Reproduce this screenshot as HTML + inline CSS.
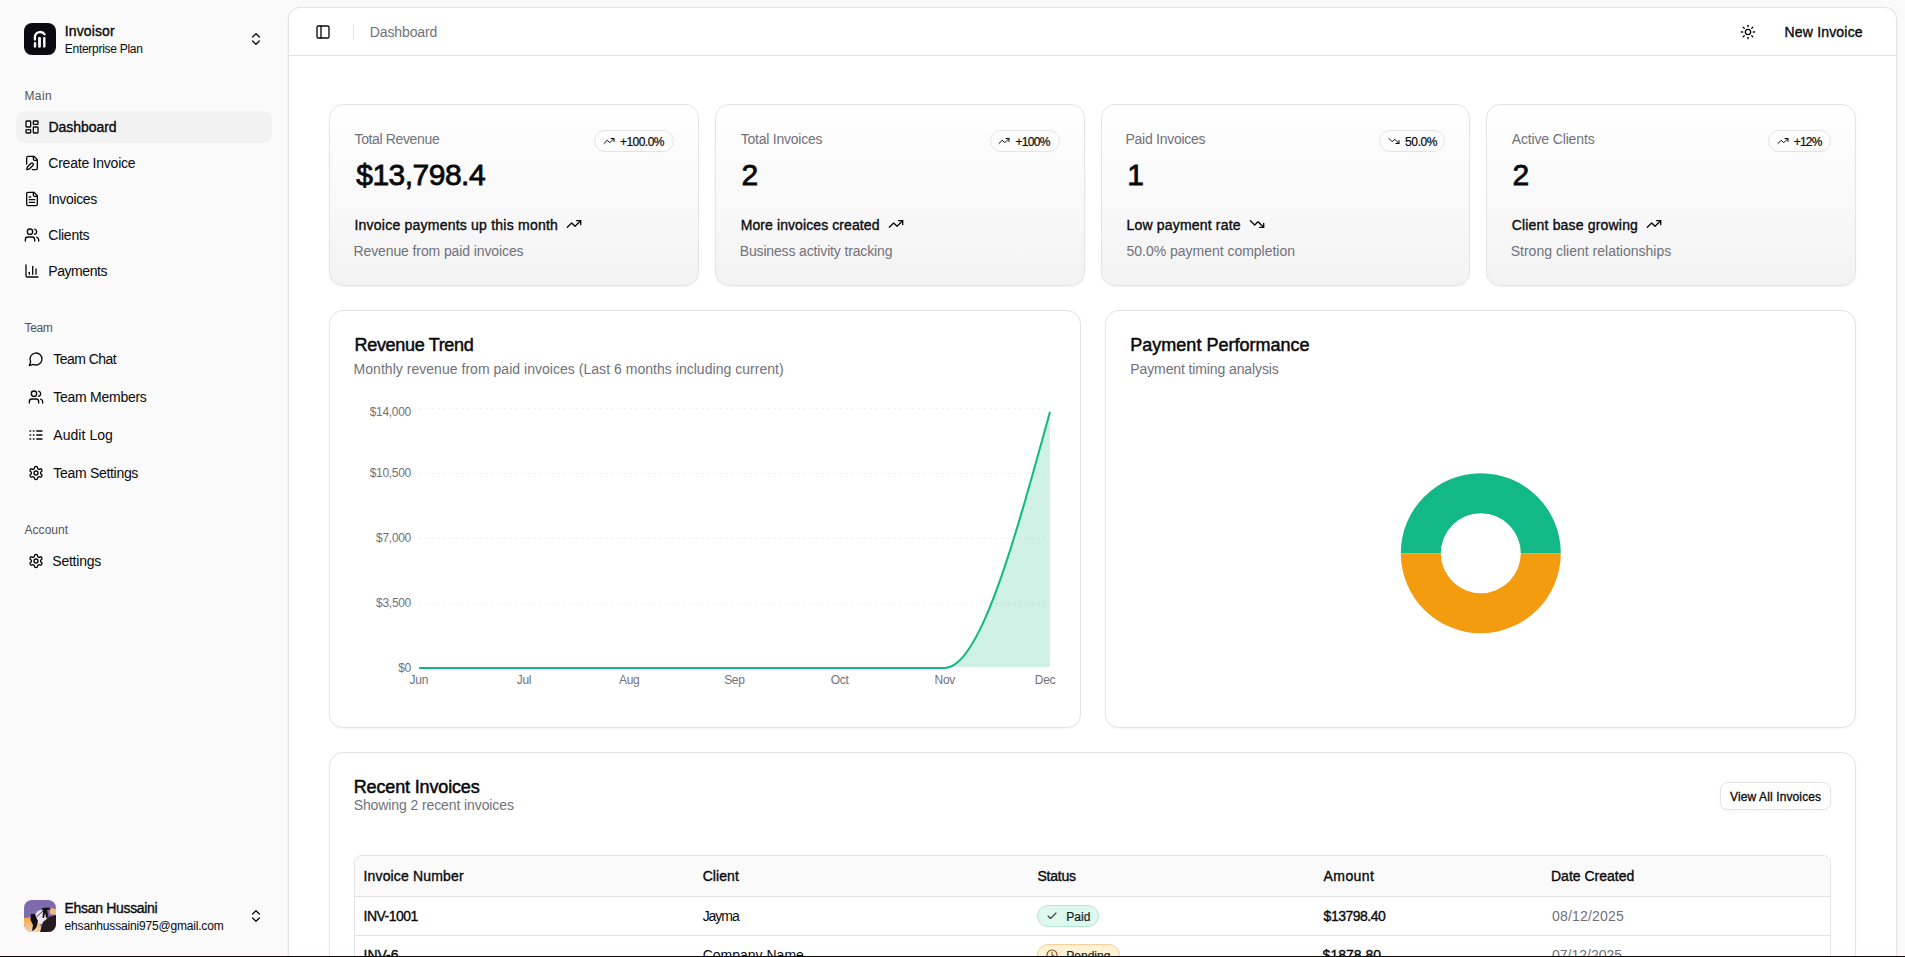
<!DOCTYPE html>
<html><head><meta charset="utf-8">
<style>
*{box-sizing:border-box;margin:0;padding:0}
html,body{width:1905px;height:957px;overflow:hidden;background:#fafafa;font-family:"Liberation Sans",sans-serif;color:#09090b}
.a{position:absolute;white-space:nowrap;line-height:1}
svg.i{position:absolute;fill:none;stroke:currentColor;stroke-linecap:round;stroke-linejoin:round}
.box{position:absolute}
</style></head><body>
<div class="box" style="left:24px;top:23px;width:32px;height:32px;background:#0b0a12;border-radius:8px"></div>
<svg class="box" style="left:24px;top:23px" width="32" height="32" viewBox="0 0 32 32"><path d="M10.9 16.6V14.2A5.3 5.3 0 0 1 20.6 11.4" fill="none" stroke="#fff" stroke-width="2.3" stroke-linecap="round"/><rect x="9.8" y="19" width="2.4" height="5.7" rx="1.1" fill="#fff"/><rect x="14.1" y="14" width="2.8" height="10.7" rx="1.1" fill="#fff"/><rect x="19.1" y="14" width="2.4" height="10.7" rx="1.1" fill="#fff"/></svg>
<svg class="i" style="left:248px;top:31px;color:#09090b" width="16" height="16" viewBox="0 0 24 24" stroke-width="2"><path d="m7 15 5 5 5-5"/><path d="m7 9 5-5 5 5"/></svg>
<div class="box" style="left:16px;top:111px;width:256px;height:32px;background:#f2f2f3;border-radius:8px"></div>
<svg class="i" style="left:24px;top:119px;color:#09090b" width="16" height="16" viewBox="0 0 24 24" stroke-width="2"><rect width="7" height="9" x="3" y="3" rx="1"/><rect width="7" height="5" x="14" y="3" rx="1"/><rect width="7" height="9" x="14" y="12" rx="1"/><rect width="7" height="5" x="3" y="16" rx="1"/></svg>
<svg class="i" style="left:24px;top:155px;color:#09090b" width="16" height="16" viewBox="0 0 24 24" stroke-width="2"><path d="M12.5 22H18a2 2 0 0 0 2-2V7l-5-5H6a2 2 0 0 0-2 2v9.5"/><path d="M14 2v4a2 2 0 0 0 2 2h4"/><path d="M13.378 15.626a1 1 0 1 0-3.004-3.004l-5.01 5.012a2 2 0 0 0-.506.854l-.837 2.87a.5.5 0 0 0 .62.62l2.87-.837a2 2 0 0 0 .854-.506z"/></svg>
<svg class="i" style="left:24px;top:191px;color:#09090b" width="16" height="16" viewBox="0 0 24 24" stroke-width="2"><path d="M15 2H6a2 2 0 0 0-2 2v16a2 2 0 0 0 2 2h12a2 2 0 0 0 2-2V7Z"/><path d="M14 2v4a2 2 0 0 0 2 2h4"/><path d="M10 9H8"/><path d="M16 13H8"/><path d="M16 17H8"/></svg>
<svg class="i" style="left:24px;top:227px;color:#09090b" width="16" height="16" viewBox="0 0 24 24" stroke-width="2"><path d="M16 21v-2a4 4 0 0 0-4-4H6a4 4 0 0 0-4 4v2"/><circle cx="9" cy="7" r="4"/><path d="M22 21v-2a4 4 0 0 0-3-3.87"/><path d="M16 3.13a4 4 0 0 1 0 7.75"/></svg>
<svg class="i" style="left:24px;top:263px;color:#09090b" width="16" height="16" viewBox="0 0 24 24" stroke-width="2"><path d="M3 3v16a2 2 0 0 0 2 2h16"/><path d="M18 17V9"/><path d="M13 17V5"/><path d="M8 17v-3"/></svg>
<svg class="i" style="left:28px;top:351px;color:#09090b" width="16" height="16" viewBox="0 0 24 24" stroke-width="2"><path d="M7.9 20A9 9 0 1 0 4 16.1L2 22Z"/></svg>
<svg class="i" style="left:28px;top:389px;color:#09090b" width="16" height="16" viewBox="0 0 24 24" stroke-width="2"><path d="M16 21v-2a4 4 0 0 0-4-4H6a4 4 0 0 0-4 4v2"/><circle cx="9" cy="7" r="4"/><path d="M22 21v-2a4 4 0 0 0-3-3.87"/><path d="M16 3.13a4 4 0 0 1 0 7.75"/></svg>
<svg class="i" style="left:28px;top:427px;color:#09090b" width="16" height="16" viewBox="0 0 24 24" stroke-width="2"><path d="M13 12h8"/><path d="M13 18h8"/><path d="M13 6h8"/><path d="M3 12h1"/><path d="M3 18h1"/><path d="M3 6h1"/><path d="M8 12h1"/><path d="M8 18h1"/><path d="M8 6h1"/></svg>
<svg class="i" style="left:28px;top:465px;color:#09090b" width="16" height="16" viewBox="0 0 24 24" stroke-width="2"><path d="M12.22 2h-.44a2 2 0 0 0-2 2v.18a2 2 0 0 1-1 1.73l-.43.25a2 2 0 0 1-2 0l-.15-.08a2 2 0 0 0-2.73.73l-.22.38a2 2 0 0 0 .73 2.73l.15.1a2 2 0 0 1 1 1.72v.51a2 2 0 0 1-1 1.74l-.15.09a2 2 0 0 0-.73 2.73l.22.38a2 2 0 0 0 2.73.73l.15-.08a2 2 0 0 1 2 0l.43.25a2 2 0 0 1 1 1.73V20a2 2 0 0 0 2 2h.44a2 2 0 0 0 2-2v-.18a2 2 0 0 1 1-1.73l.43-.25a2 2 0 0 1 2 0l.15.08a2 2 0 0 0 2.73-.73l.22-.39a2 2 0 0 0-.73-2.73l-.15-.08a2 2 0 0 1-1-1.74v-.5a2 2 0 0 1 1-1.74l.15-.09a2 2 0 0 0 .73-2.73l-.22-.38a2 2 0 0 0-2.73-.73l-.15.08a2 2 0 0 1-2 0l-.43-.25a2 2 0 0 1-1-1.73V4a2 2 0 0 0-2-2z"/><circle cx="12" cy="12" r="3"/></svg>
<svg class="i" style="left:28px;top:553px;color:#09090b" width="16" height="16" viewBox="0 0 24 24" stroke-width="2"><path d="M12.22 2h-.44a2 2 0 0 0-2 2v.18a2 2 0 0 1-1 1.73l-.43.25a2 2 0 0 1-2 0l-.15-.08a2 2 0 0 0-2.73.73l-.22.38a2 2 0 0 0 .73 2.73l.15.1a2 2 0 0 1 1 1.72v.51a2 2 0 0 1-1 1.74l-.15.09a2 2 0 0 0-.73 2.73l.22.38a2 2 0 0 0 2.73.73l.15-.08a2 2 0 0 1 2 0l.43.25a2 2 0 0 1 1 1.73V20a2 2 0 0 0 2 2h.44a2 2 0 0 0 2-2v-.18a2 2 0 0 1 1-1.73l.43-.25a2 2 0 0 1 2 0l.15.08a2 2 0 0 0 2.73-.73l.22-.39a2 2 0 0 0-.73-2.73l-.15-.08a2 2 0 0 1-1-1.74v-.5a2 2 0 0 1 1-1.74l.15-.09a2 2 0 0 0 .73-2.73l-.22-.38a2 2 0 0 0-2.73-.73l-.15.08a2 2 0 0 1-2 0l-.43-.25a2 2 0 0 1-1-1.73V4a2 2 0 0 0-2-2z"/><circle cx="12" cy="12" r="3"/></svg>
<svg class="box" style="left:24px;top:900px" width="32" height="32" viewBox="0 0 32 32">
<defs><clipPath id="av"><rect width="32" height="32" rx="8"/></clipPath>
<linearGradient id="org" x1="0" y1="0" x2="0" y2="1"><stop offset="0" stop-color="#f2a640"/><stop offset="1" stop-color="#f3d2b0"/></linearGradient></defs>
<g clip-path="url(#av)"><rect width="32" height="32" fill="#7f6aae"/>
<path d="M0 18 L8 17 L15 19 L18 32 L0 32Z" fill="url(#org)"/>
<path d="M26 8 L32 9 L32 15 L26 14Z" fill="#f0b980"/>
<ellipse cx="17" cy="17" rx="6" ry="7" fill="#ece6ee"/>
<path d="M16 32 L19 22 L25 17 L32 15 L32 32Z" fill="#241a1f"/>
<path d="M18 8 L25 7.5 L27 9.5 L23 10 L24.5 17 L22 18 L21 13 L20 18 L18.5 18 L19 11Z" fill="#121015"/>
<path d="M7 14 L11 14 L12.5 18 L14 21 L12.5 27 L10 30 L8 31 L9 25 L6.5 20Z" fill="#121015"/>
<path d="M12.5 17 L19.5 10.5" stroke="#3a3036" stroke-width="1"/>
</g></svg>
<svg class="i" style="left:248px;top:908px;color:#09090b" width="16" height="16" viewBox="0 0 24 24" stroke-width="2"><path d="m7 15 5 5 5-5"/><path d="m7 9 5-5 5 5"/></svg>
<div class="box" style="left:288px;top:7px;width:1609px;height:1000px;background:#fff;border:1px solid #e4e4e7;border-radius:12px;box-shadow:0 1px 3px rgba(0,0,0,.07)"></div>
<div class="box" style="left:289px;top:55px;width:1607px;height:1px;background:#e4e4e7"></div>
<svg class="i" style="left:315px;top:24px;color:#09090b" width="16" height="16" viewBox="0 0 24 24" stroke-width="2"><rect width="18" height="18" x="3" y="3" rx="2"/><path d="M9 3v18"/></svg>
<div class="box" style="left:353px;top:24px;width:1px;height:16px;background:#e4e4e7"></div>
<svg class="i" style="left:1740px;top:24px;color:#09090b" width="16" height="16" viewBox="0 0 24 24" stroke-width="2"><circle cx="12" cy="12" r="4"/><path d="M12 2v2"/><path d="M12 20v2"/><path d="m4.93 4.93 1.41 1.41"/><path d="m17.66 17.66 1.41 1.41"/><path d="M2 12h2"/><path d="M20 12h2"/><path d="m6.34 17.66-1.41 1.41"/><path d="m19.07 4.93-1.41 1.41"/></svg>
<div class="box" style="left:329px;top:104px;width:370px;height:182px;border:1px solid #e4e4e7;border-radius:14px;background:linear-gradient(to bottom,#ffffff 0%,#f3f3f4 100%);box-shadow:0 1px 2px rgba(0,0,0,.05)"></div>
<div class="box" style="left:594.0px;top:130px;width:79.5px;height:22px;border:1px solid #e4e4e7;border-radius:999px"></div>
<svg class="i" style="left:603px;top:135px;color:#09090b" width="12" height="12" viewBox="0 0 24 24" stroke-width="2"><path d="M22 7 13.5 15.5 8.5 10.5 2 17"/><path d="M16 7h6v6"/></svg>
<div class="box" style="left:715px;top:104px;width:370px;height:182px;border:1px solid #e4e4e7;border-radius:14px;background:linear-gradient(to bottom,#ffffff 0%,#f3f3f4 100%);box-shadow:0 1px 2px rgba(0,0,0,.05)"></div>
<div class="box" style="left:989.5px;top:130px;width:70.2px;height:22px;border:1px solid #e4e4e7;border-radius:999px"></div>
<svg class="i" style="left:998px;top:135px;color:#09090b" width="12" height="12" viewBox="0 0 24 24" stroke-width="2"><path d="M22 7 13.5 15.5 8.5 10.5 2 17"/><path d="M16 7h6v6"/></svg>
<div class="box" style="left:1101px;top:104px;width:369px;height:182px;border:1px solid #e4e4e7;border-radius:14px;background:linear-gradient(to bottom,#ffffff 0%,#f3f3f4 100%);box-shadow:0 1px 2px rgba(0,0,0,.05)"></div>
<div class="box" style="left:1379.1px;top:130px;width:66.4px;height:22px;border:1px solid #e4e4e7;border-radius:999px"></div>
<svg class="i" style="left:1388px;top:135px;color:#09090b" width="12" height="12" viewBox="0 0 24 24" stroke-width="2"><path d="M22 17 13.5 8.5 8.5 13.5 2 7"/><path d="M16 17h6v-6"/></svg>
<div class="box" style="left:1486px;top:104px;width:370px;height:182px;border:1px solid #e4e4e7;border-radius:14px;background:linear-gradient(to bottom,#ffffff 0%,#f3f3f4 100%);box-shadow:0 1px 2px rgba(0,0,0,.05)"></div>
<div class="box" style="left:1767.7px;top:130px;width:63px;height:22px;border:1px solid #e4e4e7;border-radius:999px"></div>
<svg class="i" style="left:1777px;top:135px;color:#09090b" width="12" height="12" viewBox="0 0 24 24" stroke-width="2"><path d="M22 7 13.5 15.5 8.5 10.5 2 17"/><path d="M16 7h6v6"/></svg>
<div class="box" style="left:329px;top:310px;width:752px;height:418px;border:1px solid #e4e4e7;border-radius:14px;background:#fff;box-shadow:0 1px 2px rgba(0,0,0,.05)"></div>
<div class="box" style="left:1105px;top:310px;width:751px;height:418px;border:1px solid #e4e4e7;border-radius:14px;background:#fff;box-shadow:0 1px 2px rgba(0,0,0,.05)"></div>
<svg class="box" style="left:0;top:0" width="1905" height="957" viewBox="0 0 1905 957">
<line x1="419" x2="1050" y1="408.5" y2="408.5" stroke="#f1f1f3" stroke-dasharray="3 3" stroke-width="1"/>
<line x1="419" x2="1050" y1="473.5" y2="473.5" stroke="#f1f1f3" stroke-dasharray="3 3" stroke-width="1"/>
<line x1="419" x2="1050" y1="538.5" y2="538.5" stroke="#f1f1f3" stroke-dasharray="3 3" stroke-width="1"/>
<line x1="419" x2="1050" y1="603.5" y2="603.5" stroke="#f1f1f3" stroke-dasharray="3 3" stroke-width="1"/>
<path d="M419,667 L944.8,667 C979.9,667 1014.9,539.3 1050,411.7 L1050,667 Z" fill="#10b981" fill-opacity="0.2"/>
<path d="M419,667.9 L944.8,667.9 C979.9,667.9 1014.9,539.3 1050,411.7" fill="none" stroke="#10b981" stroke-width="2"/>
<path d="M1400.8,553.2 A80,80 0 0 1 1560.8,553.2 L1520.8,553.2 A40,40 0 0 0 1440.8,553.2 Z" fill="#12b886"/>
<path d="M1560.8,553.2 A80,80 0 0 1 1400.8,553.2 L1440.8,553.2 A40,40 0 0 0 1520.8,553.2 Z" fill="#f39c0f"/>
</svg>
<div class="a" style="right:1494px;top:406px;font-size:12px;color:#71717a;letter-spacing:-0.3px">$14,000</div>
<div class="a" style="right:1494px;top:467px;font-size:12px;color:#71717a;letter-spacing:-0.3px">$10,500</div>
<div class="a" style="right:1494px;top:532px;font-size:12px;color:#71717a;letter-spacing:-0.3px">$7,000</div>
<div class="a" style="right:1494px;top:597px;font-size:12px;color:#71717a;letter-spacing:-0.3px">$3,500</div>
<div class="a" style="right:1494px;top:662px;font-size:12px;color:#71717a;letter-spacing:-0.3px">$0</div>
<div class="a" style="left:398.8px;width:40px;text-align:center;top:674px;font-size:12px;color:#71717a;letter-spacing:-0.3px">Jun</div>
<div class="a" style="left:504.0px;width:40px;text-align:center;top:674px;font-size:12px;color:#71717a;letter-spacing:-0.3px">Jul</div>
<div class="a" style="left:609.2px;width:40px;text-align:center;top:674px;font-size:12px;color:#71717a;letter-spacing:-0.3px">Aug</div>
<div class="a" style="left:714.4px;width:40px;text-align:center;top:674px;font-size:12px;color:#71717a;letter-spacing:-0.3px">Sep</div>
<div class="a" style="left:819.6px;width:40px;text-align:center;top:674px;font-size:12px;color:#71717a;letter-spacing:-0.3px">Oct</div>
<div class="a" style="left:924.8px;width:40px;text-align:center;top:674px;font-size:12px;color:#71717a;letter-spacing:-0.3px">Nov</div>
<div class="a" style="left:1025.0px;width:40px;text-align:center;top:674px;font-size:12px;color:#71717a;letter-spacing:-0.3px">Dec</div>
<div class="box" style="left:329px;top:752px;width:1527px;height:400px;border:1px solid #e4e4e7;border-radius:14px;background:#fff;box-shadow:0 1px 2px rgba(0,0,0,.05)"></div>
<div class="box" style="left:1720px;top:782px;width:111px;height:28px;border:1px solid #e4e4e7;border-radius:8px;background:#fff;box-shadow:0 1px 2px rgba(0,0,0,.05)"></div>
<div class="box" style="left:354px;top:855px;width:1477px;height:200px;border:1px solid #e4e4e7;border-radius:8px;overflow:hidden"><div style="height:41px;background:#fafafa;border-bottom:1px solid #e4e4e7"></div><div style="height:39px;border-bottom:1px solid #e4e4e7"></div></div>
<div class="box" style="left:1037px;top:905px;width:62px;height:22px;border:1px solid #b4ead3;background:#dcf8ef;border-radius:999px"></div>
<svg class="i" style="left:1046px;top:910px;color:#3f3f46" width="12" height="12" viewBox="0 0 24 24" stroke-width="2.3"><path d="M20 6 9 17l-5-5"/></svg>
<div class="box" style="left:1037px;top:944px;width:83px;height:22px;border:1px solid #f8cf9a;background:#fdf3d4;border-radius:999px"></div>
<svg class="i" style="left:1046px;top:949px;color:#8a4b12" width="12" height="12" viewBox="0 0 24 24" stroke-width="2.2"><circle cx="12" cy="12" r="10"/><path d="M12 6v6l4 2"/></svg>
<div class="a" style="left:64.80px;top:24px;font-size:14px;-webkit-text-stroke:0.35px #09090b;color:#09090b;letter-spacing:0.114px;">Invoisor</div>
<div class="a" style="left:64.80px;top:43px;font-size:12px;color:#09090b;letter-spacing:-0.286px;">Enterprise Plan</div>
<div class="a" style="left:24.40px;top:90px;font-size:12px;color:#52525b;letter-spacing:0.408px;">Main</div>
<div class="a" style="left:48.50px;top:120px;font-size:14px;-webkit-text-stroke:0.35px #09090b;color:#09090b;letter-spacing:-0.046px;">Dashboard</div>
<div class="a" style="left:48.30px;top:156px;font-size:14px;color:#09090b;letter-spacing:-0.231px;">Create Invoice</div>
<div class="a" style="left:48.30px;top:192px;font-size:14px;color:#09090b;letter-spacing:-0.340px;">Invoices</div>
<div class="a" style="left:48.30px;top:228px;font-size:14px;color:#09090b;letter-spacing:-0.253px;">Clients</div>
<div class="a" style="left:48.30px;top:264px;font-size:14px;color:#09090b;letter-spacing:-0.439px;">Payments</div>
<div class="a" style="left:24.50px;top:322px;font-size:12px;color:#52525b;letter-spacing:-0.368px;">Team</div>
<div class="a" style="left:53.30px;top:352px;font-size:14px;color:#09090b;letter-spacing:-0.553px;">Team Chat</div>
<div class="a" style="left:53.30px;top:390px;font-size:14px;color:#09090b;letter-spacing:-0.263px;">Team Members</div>
<div class="a" style="left:53.30px;top:428px;font-size:14px;color:#09090b;letter-spacing:0.051px;">Audit Log</div>
<div class="a" style="left:53.30px;top:466px;font-size:14px;color:#09090b;letter-spacing:-0.303px;">Team Settings</div>
<div class="a" style="left:24.50px;top:524px;font-size:12px;color:#52525b;letter-spacing:0.047px;">Account</div>
<div class="a" style="left:52.30px;top:554px;font-size:14px;color:#09090b;letter-spacing:-0.231px;">Settings</div>
<div class="a" style="left:64.60px;top:901px;font-size:14px;-webkit-text-stroke:0.35px #09090b;color:#09090b;letter-spacing:-0.327px;">Ehsan Hussaini</div>
<div class="a" style="left:64.60px;top:920px;font-size:12px;color:#09090b;letter-spacing:-0.183px;">ehsanhussaini975@gmail.com</div>
<div class="a" style="left:369.80px;top:25px;font-size:14px;color:#71717a;letter-spacing:-0.115px;">Dashboard</div>
<div class="a" style="left:1784.50px;top:25px;font-size:14px;-webkit-text-stroke:0.35px #09090b;color:#09090b;letter-spacing:0.186px;">New Invoice</div>
<div class="a" style="left:354.50px;top:132px;font-size:14px;color:#71717a;letter-spacing:-0.361px;">Total Revenue</div>
<div class="a" style="left:620.00px;top:136px;font-size:12px;color:#09090b;letter-spacing:-0.546px;-webkit-text-stroke:0.2px #09090b">+100.0%</div>
<div class="a" style="left:356.30px;top:159.5px;font-size:30px;-webkit-text-stroke:0.8px #09090b;color:#09090b;letter-spacing:-0.521px;">$13,798.4</div>
<div class="a" style="left:354.50px;top:218px;font-size:14px;-webkit-text-stroke:0.35px #09090b;color:#09090b;letter-spacing:0.222px;">Invoice payments up this month</div>
<div class="a" style="left:353.50px;top:244px;font-size:14px;color:#71717a;letter-spacing:-0.107px;">Revenue from paid invoices</div>
<div class="a" style="left:740.70px;top:132px;font-size:14px;color:#71717a;letter-spacing:-0.227px;">Total Invoices</div>
<div class="a" style="left:1015.50px;top:136px;font-size:12px;color:#09090b;letter-spacing:-0.691px;-webkit-text-stroke:0.2px #09090b">+100%</div>
<div class="a" style="left:741.50px;top:159.5px;font-size:30px;-webkit-text-stroke:0.8px #09090b;color:#09090b;">2</div>
<div class="a" style="left:740.70px;top:218px;font-size:14px;-webkit-text-stroke:0.35px #09090b;color:#09090b;letter-spacing:0.094px;">More invoices created</div>
<div class="a" style="left:739.70px;top:244px;font-size:14px;color:#71717a;letter-spacing:-0.145px;">Business activity tracking</div>
<div class="a" style="left:1125.50px;top:132px;font-size:14px;color:#71717a;letter-spacing:-0.275px;">Paid Invoices</div>
<div class="a" style="left:1405.10px;top:136px;font-size:12px;color:#09090b;letter-spacing:-0.398px;-webkit-text-stroke:0.2px #09090b">50.0%</div>
<div class="a" style="left:1127.30px;top:159.5px;font-size:30px;-webkit-text-stroke:0.8px #09090b;color:#09090b;">1</div>
<div class="a" style="left:1126.50px;top:218px;font-size:14px;-webkit-text-stroke:0.35px #09090b;color:#09090b;letter-spacing:0.182px;">Low payment rate</div>
<div class="a" style="left:1126.50px;top:244px;font-size:14px;color:#71717a;letter-spacing:-0.017px;">50.0% payment completion</div>
<div class="a" style="left:1511.70px;top:132px;font-size:14px;color:#71717a;letter-spacing:-0.141px;">Active Clients</div>
<div class="a" style="left:1793.70px;top:136px;font-size:12px;color:#09090b;letter-spacing:-0.797px;-webkit-text-stroke:0.2px #09090b">+12%</div>
<div class="a" style="left:1512.50px;top:159.5px;font-size:30px;-webkit-text-stroke:0.8px #09090b;color:#09090b;">2</div>
<div class="a" style="left:1511.70px;top:218px;font-size:14px;-webkit-text-stroke:0.35px #09090b;color:#09090b;letter-spacing:0.181px;">Client base growing</div>
<div class="a" style="left:1510.70px;top:244px;font-size:14px;color:#71717a;letter-spacing:0.010px;">Strong client relationships</div>
<div class="a" style="left:354.60px;top:336px;font-size:18px;-webkit-text-stroke:0.5px #09090b;color:#09090b;letter-spacing:-0.328px;">Revenue Trend</div>
<div class="a" style="left:353.60px;top:362px;font-size:14px;color:#71717a;letter-spacing:0.031px;">Monthly revenue from paid invoices (Last 6 months including current)</div>
<div class="a" style="left:1130.30px;top:336px;font-size:18px;-webkit-text-stroke:0.5px #09090b;color:#09090b;letter-spacing:0.010px;">Payment Performance</div>
<div class="a" style="left:1130.30px;top:362px;font-size:14px;color:#71717a;letter-spacing:-0.112px;">Payment timing analysis</div>
<div class="a" style="left:353.70px;top:778px;font-size:18px;-webkit-text-stroke:0.5px #09090b;color:#09090b;letter-spacing:-0.144px;">Recent Invoices</div>
<div class="a" style="left:353.70px;top:798px;font-size:14px;color:#71717a;letter-spacing:-0.099px;">Showing 2 recent invoices</div>
<div class="a" style="left:1730.00px;top:791px;font-size:12px;-webkit-text-stroke:0.3px #09090b;color:#09090b;letter-spacing:0.118px;">View All Invoices</div>
<div class="a" style="left:363.50px;top:869px;font-size:14px;-webkit-text-stroke:0.35px #09090b;color:#09090b;letter-spacing:0.160px;">Invoice Number</div>
<div class="a" style="left:702.70px;top:869px;font-size:14px;-webkit-text-stroke:0.35px #09090b;color:#09090b;letter-spacing:0.067px;">Client</div>
<div class="a" style="left:1037.50px;top:869px;font-size:14px;-webkit-text-stroke:0.35px #09090b;color:#09090b;letter-spacing:-0.215px;">Status</div>
<div class="a" style="left:1323.60px;top:869px;font-size:14px;-webkit-text-stroke:0.35px #09090b;color:#09090b;letter-spacing:0.400px;">Amount</div>
<div class="a" style="left:1551.00px;top:869px;font-size:14px;-webkit-text-stroke:0.35px #09090b;color:#09090b;letter-spacing:0.004px;">Date Created</div>
<div class="a" style="left:363.50px;top:909px;font-size:14px;-webkit-text-stroke:0.35px #09090b;color:#09090b;letter-spacing:-0.506px;">INV-1001</div>
<div class="a" style="left:702.70px;top:909px;font-size:14px;color:#09090b;letter-spacing:-1.064px;">Jayma</div>
<div class="a" style="left:1323.60px;top:909px;font-size:14px;-webkit-text-stroke:0.35px #09090b;color:#09090b;letter-spacing:-0.495px;">$13798.40</div>
<div class="a" style="left:1552.00px;top:909px;font-size:14px;color:#71717a;letter-spacing:0.189px;">08/12/2025</div>
<div class="a" style="left:363.50px;top:948px;font-size:14px;-webkit-text-stroke:0.35px #09090b;color:#09090b;">INV-6</div>
<div class="a" style="left:702.70px;top:948px;font-size:14px;color:#09090b;">Company Name</div>
<div class="a" style="left:1322.60px;top:948px;font-size:14px;-webkit-text-stroke:0.35px #09090b;color:#09090b;">$1878.80</div>
<div class="a" style="left:1552.00px;top:948px;font-size:14px;color:#71717a;">07/12/2025</div>
<div class="a" style="left:1066.30px;top:911px;font-size:12px;color:#18181b;-webkit-text-stroke:0.2px #18181b">Paid</div>
<div class="a" style="left:1066.30px;top:950px;font-size:12px;color:#27272a;-webkit-text-stroke:0.2px #27272a">Pending</div>
<svg class="i" style="left:566px;top:216px;color:#09090b" width="16" height="16" viewBox="0 0 24 24" stroke-width="2"><path d="M22 7 13.5 15.5 8.5 10.5 2 17"/><path d="M16 7h6v6"/></svg>
<svg class="i" style="left:888px;top:216px;color:#09090b" width="16" height="16" viewBox="0 0 24 24" stroke-width="2"><path d="M22 7 13.5 15.5 8.5 10.5 2 17"/><path d="M16 7h6v6"/></svg>
<svg class="i" style="left:1249px;top:216px;color:#09090b" width="16" height="16" viewBox="0 0 24 24" stroke-width="2"><path d="M22 17 13.5 8.5 8.5 13.5 2 7"/><path d="M16 17h6v-6"/></svg>
<svg class="i" style="left:1646px;top:216px;color:#09090b" width="16" height="16" viewBox="0 0 24 24" stroke-width="2"><path d="M22 7 13.5 15.5 8.5 10.5 2 17"/><path d="M16 7h6v6"/></svg>
<div class="box" style="left:0;top:956px;width:1905px;height:1px;background:#0a0505"></div>
</body></html>
